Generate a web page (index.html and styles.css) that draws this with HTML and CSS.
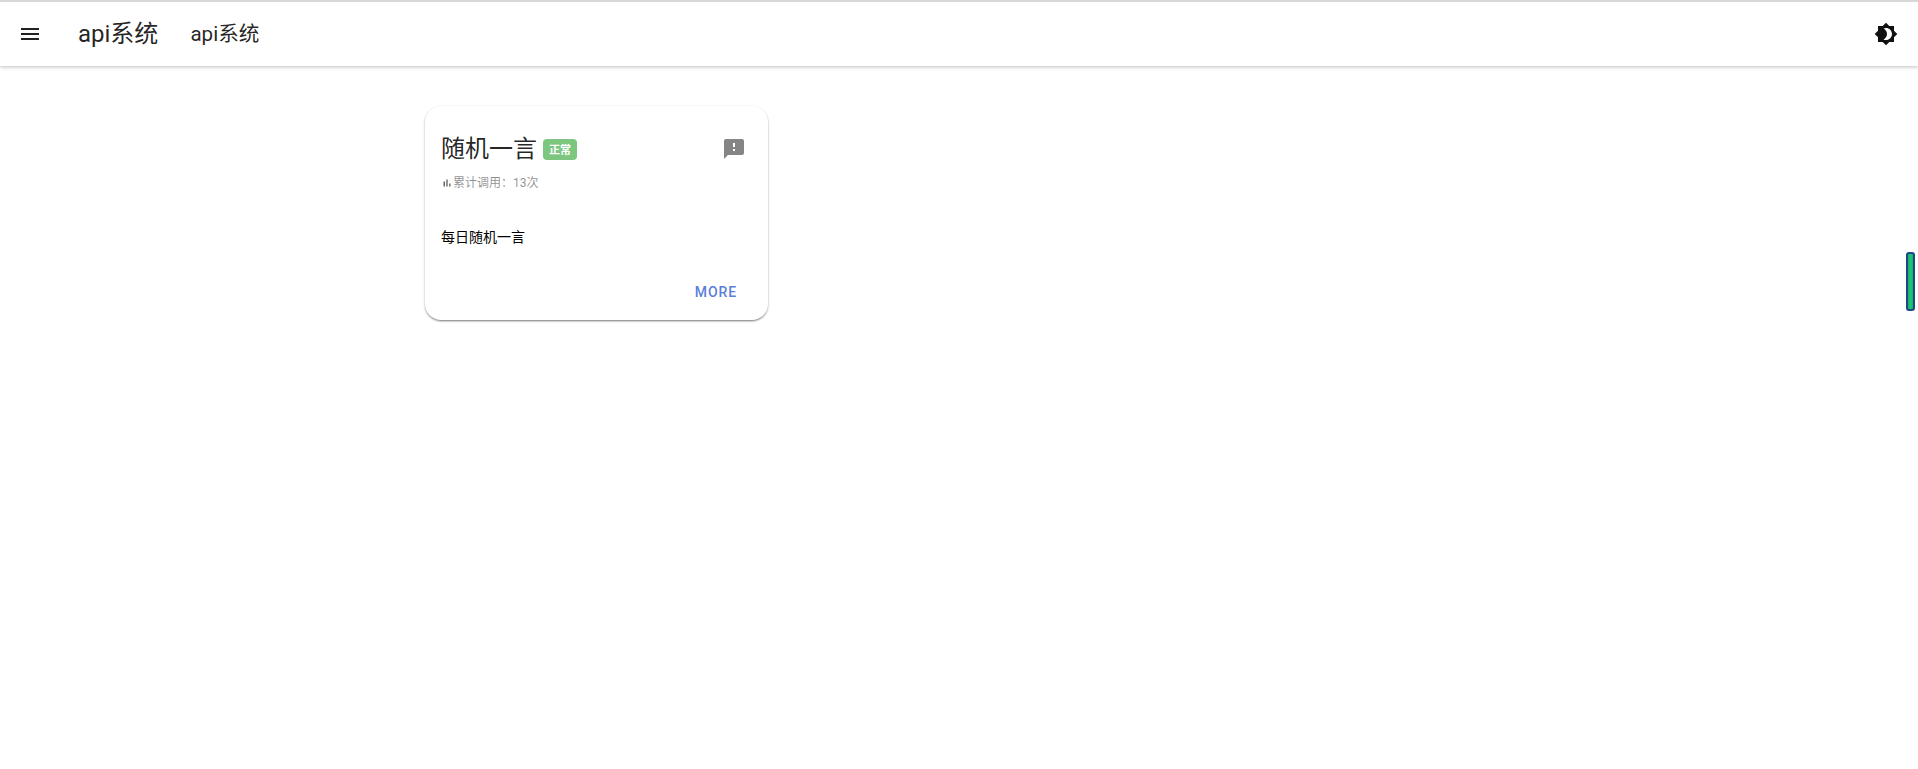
FILE: index.html
```html
<!DOCTYPE html>
<html lang="zh-CN">
<head>
<meta charset="utf-8">
<title>api系统</title>
<link rel="stylesheet" href="styles.css">
</head>
<body>
<header class="appbar">
  <button class="icon-btn nav-btn" aria-label="menu">
    <svg viewBox="0 0 24 24" width="24" height="24"><path d="M3 18h18v-2H3v2zm0-5h18v-2H3v2zm0-7v2h18V6H3z"/></svg>
  </button>
  <div class="app-title">api系统</div>
  <div class="page-title">api系统</div>
  <div class="spacer"></div>
  <button class="icon-btn theme-btn" aria-label="theme">
    <svg viewBox="0 0 24 24" width="24" height="24"><path d="M20 8.69V4h-4.69L12 .69 8.69 4H4v4.69L.69 12 4 15.31V20h4.69L12 23.31 15.31 20H20v-4.69L23.31 12 20 8.69zM12 18c-.89 0-1.74-.2-2.5-.55C11.56 16.5 13 14.42 13 12s-1.44-4.5-3.5-5.45C10.26 6.2 11.11 6 12 6c3.31 0 6 2.69 6 6s-2.69 6-6 6z"/></svg>
  </button>
</header>
<main class="content">
  <article class="card">
    <div class="card-head">
      <div class="head-main">
        <div class="title-row">
          <h2 class="card-title">随机一言</h2>
          <span class="badge">正常</span>
        </div>
        <div class="stats">
          <svg class="stats-icon" viewBox="0 0 24 24" width="12" height="12"><path d="M5 9.2h3V19H5zM10.6 5h2.8v14h-2.8zm5.6 8H19v6h-2.8z"/></svg>
          <span>累计调用：13次</span>
        </div>
      </div>
      <svg class="alert-icon" viewBox="0 0 24 24" width="24" height="24"><path d="M20 2H4c-1.1 0-1.99.9-1.99 2L2 22l4-4h14c1.1 0 2-.9 2-2V4c0-1.1-.9-2-2-2zm-7 12h-2v-2h2v2zm0-4h-2V6h2v4z"/></svg>
    </div>
    <p class="card-text">每日随机一言</p>
    <div class="card-actions"><button class="more">More</button></div>
  </article>
</main>
<div class="scroll-handle"></div>
</body>
</html>
```
FILE: styles.css
```css
* { box-sizing: border-box; }
html, body { margin: 0; height: 100%; background: #fff; overflow: hidden; }
body {
  font-family: Roboto, "Noto Sans CJK SC", sans-serif;
  color: rgba(0, 0, 0, .87);
  border-top: 2px solid #d8d8d8;
}
.appbar {
  height: 64px;
  display: flex;
  align-items: center;
  padding: 0 16px;
  background: #fff;
  box-shadow: 0 1px 3px 0 rgba(0,0,0,.16), 0 2px 4px 0 rgba(0,0,0,.08);
}
.icon-btn { border: 0; background: none; padding: 0; width: 28px; height: 28px; display: flex; align-items: center; justify-content: center; }
.icon-btn svg { fill: rgba(0,0,0,.87); }
.app-title { font-size: 24px; margin-left: 34px; line-height: 32px; }
.page-title { font-size: 20.6px; margin-left: 32px; line-height: 32px; }
.spacer { flex: 1; }
.theme-btn { margin-right: 2px; }
.theme-btn svg { fill: #111; }
.content { padding: 40px 0 0 425px; }
.card {
  width: 343px;
  height: 214px;
  background: #fff;
  border-radius: 16px;
  padding: 16px;
  display: flex;
  flex-direction: column;
  box-shadow: 0 2px 2px -1px rgba(0,0,0,.3), 0 1px 2px 0 rgba(0,0,0,.2), 0 1px 3px 0 rgba(0,0,0,.12);
}
.card-head { display: flex; justify-content: space-between; padding-top: 11px; }
.alert-icon { fill: #858585; margin: 4px 6px 0 0; }
.title-row { display: flex; align-items: center; height: 32px; }
.card-title { font-size: 24px; font-weight: 400; line-height: 32px; margin: 0; }
.badge {
  margin-left: 6px;
  background: #7cc67f;
  color: #fff;
  border-radius: 4px;
  font-size: 11px;
  font-weight: 700;
  height: 21px;
  width: 34px;
  display: flex;
  align-items: center;
  justify-content: center;
}
.stats { display: flex; align-items: center; font-size: 12px; color: rgba(0,0,0,.45); margin-top: 10px; line-height: 16px; }
.stats-icon { fill: rgba(0,0,0,.6); }
.card-text { font-size: 14px; line-height: 20px; margin: 36px 0 0; color: #000; }
.card-actions { margin-top: auto; display: flex; justify-content: flex-end; }
.more {
  border: 0; background: none; padding: 0;
  font: 500 14px Roboto, sans-serif;
  letter-spacing: .89px;
  text-transform: uppercase;
  color: #5b80d8;
  margin: 0 15px 4px 0;
}
.scroll-handle {
  position: fixed;
  right: 3px;
  top: 252px;
  width: 9px;
  height: 59px;
  background: linear-gradient(90deg, #17b066, #22c877 50%, #17b066);
  border: 2px solid #1c4a86;
  border-radius: 3px;
}
```
